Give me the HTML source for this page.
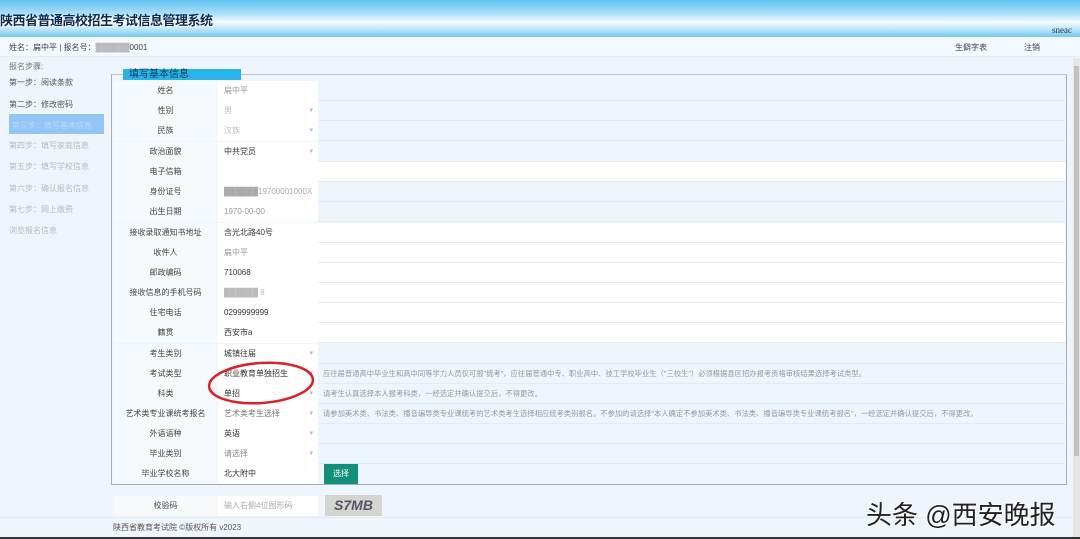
<!DOCTYPE html><html><head><meta charset="utf-8"><style>
*{margin:0;padding:0;box-sizing:border-box}
body{width:1080px;height:539px;overflow:hidden;background:#eef5fc;font-family:"Liberation Sans","Noto Sans CJK SC",sans-serif;font-size:8px;color:#333;position:relative}
.a{position:absolute}
.hd{left:0;top:0;width:1080px;height:37px;background:linear-gradient(#5fc2f2 0%,#a8def8 35%,#f2fbff 60%,#b9e4f9 80%,#74c8f1 100%)}
.title{left:0;top:10px;font-size:13px;color:#0a2a50;font-weight:bold;letter-spacing:-0.5px;text-shadow:1px 1px 0 #fff}
.info{left:0;top:37px;width:1080px;height:20px;background:#f3f9fe;border-bottom:1px solid #e2ecf4}
.row{position:absolute;left:113px;height:20px;width:952px;border-bottom:1px solid #e4eaf0}
.row .l{position:absolute;left:0;width:105px;height:20px;background:#f6f9fc;text-align:center;line-height:20px;color:#444}
.row .v{position:absolute;left:105px;width:100px;height:20px;background:#fff;line-height:20px;padding-left:6px;color:#333}
.row .v.g{color:#bbb}
.dd:after{content:"▾";position:absolute;right:5px;top:0;color:#bbb;font-size:7px}
.hint{position:absolute;left:210px;top:0;line-height:20px;color:#999;font-size:7.3px;white-space:nowrap}
.step{left:9px;color:#555}
.stepg{left:9px;color:#bbb}
</style></head><body>
<div class="a hd"></div>
<div class="a title">陕西省普通高校招生考试信息管理系统</div>
<div class="a" style="left:1052px;top:25px;font-size:9px;color:#334;font-family:'Liberation Serif',serif">sneac</div>
<div class="a info"></div>
<div class="a" style="left:9px;top:42px;color:#444">姓名：扁中平 | 报名号：<span style="color:#bbb">██████</span>0001</div>
<div class="a" style="left:955px;top:42px;color:#444">生僻字表</div>
<div class="a" style="left:1024px;top:42px;color:#444">注销</div>
<div class="a step" style="top:61px;color:#777">报名步骤:</div>
<div class="a step" style="top:77px">第一步：阅读条款</div>
<div class="a step" style="top:99px">第二步：修改密码</div>
<div class="a" style="left:9px;top:114px;width:95px;height:20px;background:#93c6f7"></div>
<div class="a" style="left:12px;top:120px;color:#b8d8fa">第三步：填写基本信息</div>
<div class="a stepg" style="top:140px">第四步：填写家庭信息</div>
<div class="a stepg" style="top:161px">第五步：填写学校信息</div>
<div class="a stepg" style="top:183px">第六步：确认报名信息</div>
<div class="a stepg" style="top:204px">第七步：网上缴费</div>
<div class="a stepg" style="top:225px">浏览报名信息</div>
<div class="a" style="left:111px;top:74px;width:956px;height:411px;border:1px solid #a8adb3;border-top-color:#c0c4c8"></div>
<div class="a" style="left:123px;top:69px;width:118px;height:11px;background:#29b4e8;color:#08385c;font-size:10px;line-height:11px;padding-left:6px">填写基本信息</div>
<div class="a" style="left:113px;top:81px;width:953px;height:403px;background:#eef6fd"></div>
<div class="row" style="top:81px"><div class="l">姓名</div><div class="v g" style="color:#999">扁中平</div></div>
<div class="row" style="top:101px"><div class="l">性别</div><div class="v g dd">男</div></div>
<div class="row" style="top:121px"><div class="l">民族</div><div class="v g dd">汉族</div></div>
<div class="row" style="top:142px"><div class="l">政治面貌</div><div class="v dd">中共党员</div></div>
<div class="row" style="top:162px;background:#fff"><div class="l">电子信箱</div><div class="v"></div></div>
<div class="row" style="top:182px"><div class="l">身份证号</div><div class="v" style="color:#aaa">██████19700001000X</div></div>
<div class="row" style="top:202px"><div class="l">出生日期</div><div class="v" style="color:#999">1970-00-00</div></div>
<div class="row" style="top:223px;background:#fff"><div class="l">接收录取通知书地址</div><div class="v">含光北路40号</div></div>
<div class="row" style="top:243px;background:#fff"><div class="l">收件人</div><div class="v" style="color:#999">扁中平</div></div>
<div class="row" style="top:263px;background:#fff"><div class="l">邮政编码</div><div class="v">710068</div></div>
<div class="row" style="top:283px;background:#fff"><div class="l">接收信息的手机号码</div><div class="v" style="color:#bbb">██████ 8</div></div>
<div class="row" style="top:303px;background:#fff"><div class="l">住宅电话</div><div class="v">0299999999</div></div>
<div class="row" style="top:323px;background:#fff"><div class="l">籍贯</div><div class="v">西安市a</div></div>
<div class="row" style="top:344px"><div class="l">考生类别</div><div class="v dd">城镇往届</div></div>
<div class="row" style="top:364px"><div class="l">考试类型</div><div class="v dd">职业教育单独招生</div><div class="hint">应往届普通高中毕业生和高中同等学力人员仅可报"统考"，应往届普通中专、职业高中、技工学校毕业生（"三校生"）必须根据县区招办报考资格审核结果选择考试类型。</div></div>
<div class="row" style="top:384px"><div class="l">科类</div><div class="v dd">单招</div><div class="hint">请考生认真选择本人报考科类，一经选定并确认提交后，不得更改。</div></div>
<div class="row" style="top:404px"><div class="l">艺术类专业课统考报名</div><div class="v g dd" style="color:#777">艺术类考生选择</div><div class="hint">请参加美术类、书法类、播音编导类专业课统考的艺术类考生选择相应统考类别报名。不参加的请选择"本人确定不参加美术类、书法类、播音编导类专业课统考报名"，一经选定并确认提交后，不得更改。</div></div>
<div class="row" style="top:424px"><div class="l">外语语种</div><div class="v dd">英语</div></div>
<div class="row" style="top:444px"><div class="l">毕业类别</div><div class="v dd" style="color:#888">请选择</div></div>
<div class="row" style="top:464px;border:none"><div class="l">毕业学校名称</div><div class="v">北大附中</div><div class="a" style="left:211px;top:0;width:34px;height:20px;background:#12907a;color:#fff;line-height:20px;text-align:center">选择</div></div>
<svg class="a" style="left:205px;top:360px" width="112" height="46"><ellipse cx="56" cy="23" rx="52" ry="20" fill="none" stroke="#d8232a" stroke-width="2.5" transform="rotate(-4 56 23)"/></svg>
<div class="row" style="top:496px;border:none;width:270px"><div class="l" style="background:#f7f9fb">校验码</div><div class="v" style="color:#aaa">输入右侧4位图形码</div></div>
<div class="a" style="left:325px;top:495px;width:57px;height:21px;background:#d5d5d0;color:#556;font-size:14px;font-weight:bold;font-style:italic;line-height:21px;text-align:center">S7MB</div>
<div class="a" style="left:0;top:517px;width:1072px;height:1px;background:#e4ebf2"></div>
<div class="a" style="left:113px;top:522px;color:#555">陕西省教育考试院 ©版权所有 v2023</div>
<div class="a" style="left:0;top:537px;width:1080px;height:2px;background:#333"></div>
<div class="a" style="left:1073px;top:58px;width:7px;height:479px;background:#e6e6e6"></div>
<div class="a" style="left:1074px;top:66px;width:5px;height:390px;background:#c2c2c2"></div>
<div class="a" style="left:866px;top:495px;font-size:26px;color:#222;text-shadow:1px 1px 0 #fff,-1px -1px 0 #fff">头条 @西安晚报</div>
</body></html>
